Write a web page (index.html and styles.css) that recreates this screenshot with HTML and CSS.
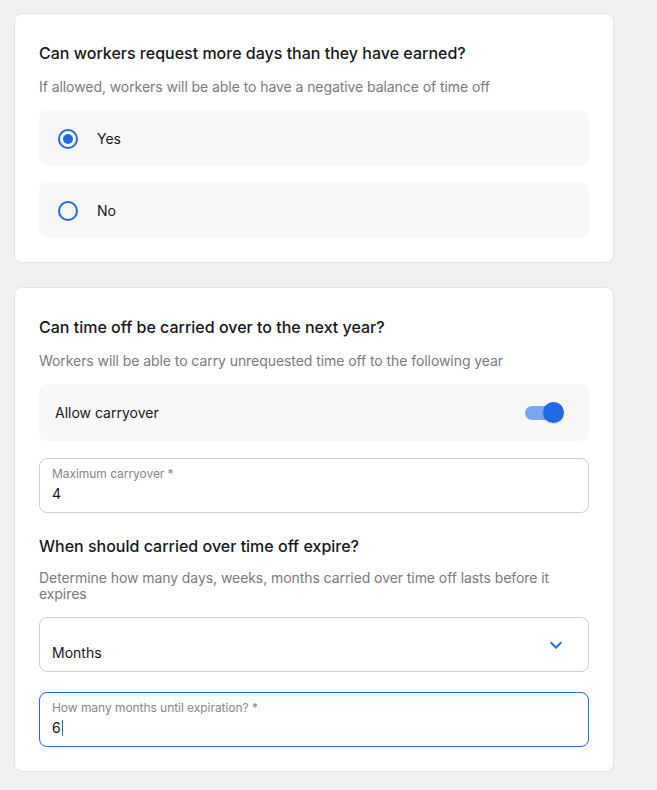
FILE: index.html
```html
<!DOCTYPE html>
<html lang="en">
<head>
<meta charset="utf-8">
<title>Time off settings</title>
<link rel="stylesheet" href="styles.css">
</head>
<body>
<main class="page">
  <section class="card">
    <h2 class="title">Can workers request more days than they have earned?</h2>
    <p class="subtitle">If allowed, workers will be able to have a negative balance of time off</p>
    <div class="options">
      <label class="option">
        <span class="radio checked"><span class="dot"></span></span>
        <span class="option-text">Yes</span>
      </label>
      <label class="option">
        <span class="radio"></span>
        <span class="option-text">No</span>
      </label>
    </div>
  </section>

  <section class="card">
    <h2 class="title">Can time off be carried over to the next year?</h2>
    <p class="subtitle">Workers will be able to carry unrequested time off to the following year</p>
    <div class="toggle-row">
      <span class="option-text">Allow carryover</span>
      <span class="switch"><span class="track"></span><span class="thumb"></span></span>
    </div>
    <div class="field">
      <div class="field-body">
        <div class="field-label">Maximum carryover *</div>
        <div class="field-value">4</div>
      </div>
    </div>

    <h2 class="title section-title">When should carried over time off expire?</h2>
    <p class="subtitle desc">Determine how many days, weeks, months carried over time off lasts before it expires</p>
    <div class="field select">
      <div class="field-body">
        <div class="field-label"></div>
        <div class="field-value">Months</div>
      </div>
      <svg class="chevron" width="24" height="24" viewBox="0 0 24 24" aria-hidden="true"><path d="M16.59 8.59 12 13.17 7.41 8.59 6 10l6 6 6-6z" fill="#1f6be6"/></svg>
    </div>
    <div class="field focused">
      <div class="field-body">
        <div class="field-label">How many months until expiration? *</div>
        <div class="field-value">6<span class="caret"></span></div>
      </div>
    </div>
  </section>
</main>
</body>
</html>
```

FILE: styles.css
```css
* { box-sizing: border-box; }

html, body {
  margin: 0;
  padding: 0;
  background: #f1f1f3;
  font-family: Inter, "Noto Sans", "Liberation Sans", sans-serif;
  color: #17171a;
}

.page {
  display: flex;
  flex-direction: column;
  gap: 24px;
  padding: 13px 0 0 14px;
  width: 614px;
}

.card {
  background: #ffffff;
  border: 1px solid #e4e4e9;
  border-radius: 8px;
  padding: 27px 24px 24px;
  display: flex;
  flex-direction: column;
}

.title {
  margin: 0;
  font-size: 16px;
  line-height: 24px;
  font-weight: 500;
  color: #17171a;
}

.subtitle {
  margin: 14px 0 0;
  font-size: 14px;
  line-height: 16px;
  letter-spacing: -0.07px;
  color: #7a7a80;
}

.options {
  display: flex;
  flex-direction: column;
  gap: 16px;
  margin-top: 15px;
}

.option {
  display: flex;
  align-items: center;
  height: 56px;
  background: #f8f8f8;
  border-radius: 8px;
  padding-left: 19px;
  padding-top: 1px;
}

.option-text {
  font-size: 14px;
  line-height: 20px;
  color: #17171a;
}

.radio {
  width: 20px;
  height: 20px;
  border: 2px solid #1f6be6;
  border-radius: 50%;
  display: flex;
  align-items: center;
  justify-content: center;
  margin-right: 19px;
  flex: none;
}

.radio .dot {
  width: 10px;
  height: 10px;
  border-radius: 50%;
  background: #1f6be6;
}

.toggle-row {
  display: flex;
  align-items: center;
  justify-content: space-between;
  height: 57px;
  margin-top: 15px;
  background: #f8f8f8;
  border-radius: 8px;
  padding: 0 25px 0 16px;
}

.switch {
  position: relative;
  width: 39px;
  height: 21px;
  flex: none;
}

.switch .track {
  position: absolute;
  left: 0;
  top: 4px;
  width: 34px;
  height: 14px;
  border-radius: 7px;
  background: #7aa5ef;
}

.switch .thumb {
  position: absolute;
  right: 0;
  top: 0;
  width: 21px;
  height: 21px;
  border-radius: 50%;
  background: #1f6be6;
  box-shadow: 0 1px 2px rgba(0, 0, 0, 0.15);
}

.field {
  display: flex;
  align-items: center;
  height: 55px;
  margin-top: 17px;
  border: 1px solid #cfcfd2;
  border-radius: 8px;
  padding: 0 20px 0 12px;
}

.field-body {
  flex: 1;
  align-self: stretch;
  padding-top: 7px;
}

.field-label {
  font-size: 12px;
  line-height: 16px;
  height: 16px;
  letter-spacing: -0.05px;
  color: #86868b;
}

.field-value {
  margin-top: 2px;
  font-size: 14px;
  line-height: 20px;
  color: #17171a;
  display: flex;
  align-items: center;
}

.chevron { flex: none; }

.section-title { margin-top: 21px; }

.desc { margin-top: 12px; }

.select { margin-top: 15px; }

.focused {
  margin-top: 20px;
  border-color: #1f6be6;
}

.caret {
  display: inline-block;
  width: 1px;
  height: 16px;
  background: #1f6be6;
  margin-left: 1px;
}
```
